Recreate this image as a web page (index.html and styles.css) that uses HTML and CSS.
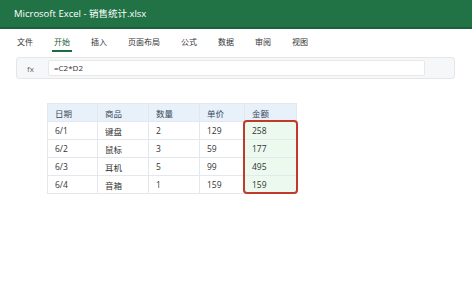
FILE: index.html
```html
<!DOCTYPE html>
<html lang="zh">
<head>
<meta charset="utf-8">
<title>Microsoft Excel - 销售统计.xlsx</title>
<link rel="stylesheet" href="styles.css">
</head>
<body>
<header class="titlebar">Microsoft Excel - 销售统计.xlsx</header>
<nav class="tabs">
  <span class="tab">文件</span>
  <span class="tab active">开始</span>
  <span class="tab">插入</span>
  <span class="tab">页面布局</span>
  <span class="tab">公式</span>
  <span class="tab">数据</span>
  <span class="tab">审阅</span>
  <span class="tab">视图</span>
</nav>
<div class="formula-bar">
  <span class="fx">fx</span>
  <div class="formula-input">=C2*D2</div>
</div>
<main class="sheet">
  <div class="table-wrap">
    <table class="grid">
      <thead>
        <tr><th class="c1">日期</th><th class="c2">商品</th><th class="c3">数量</th><th class="c4">单价</th><th class="c5">金额</th></tr>
      </thead>
      <tbody>
        <tr><td>6/1</td><td>键盘</td><td>2</td><td>129</td><td class="amt">258</td></tr>
        <tr><td>6/2</td><td>鼠标</td><td>3</td><td>59</td><td class="amt">177</td></tr>
        <tr><td>6/3</td><td>耳机</td><td>5</td><td>99</td><td class="amt">495</td></tr>
        <tr><td>6/4</td><td>音箱</td><td>1</td><td>159</td><td class="amt">159</td></tr>
      </tbody>
    </table>
    <div class="highlight"></div>
  </div>
</main>
</body>
</html>
```
FILE: styles.css
```css
* { box-sizing: border-box; }
html, body { margin: 0; padding: 0; background: #ffffff; }
body {
  font-family: "Open Sans", "Noto Sans CJK SC", sans-serif;
  font-size: 9px;
  color: #333;
}
.titlebar {
  height: 29px;
  background: #217346;
  border-bottom: 2px solid #1b5e3a;
  color: #fff;
  font-size: 9.5px;
  line-height: 27px;
  padding-left: 14px;
}
.tabs {
  display: flex;
  gap: 17px;
  padding: 7px 0 0 15px;
  height: 27px;
}
.tab {
  padding: 0 2px;
  height: 16px;
  line-height: 12px;
  font-size: 8px;
  color: #333;
}
.tab.active {
  border-bottom: 2px solid #1e6b41;
  color: #1e5e3a;
}
.formula-bar {
  margin: 1px 17px 0 16px;
  height: 22px;
  border: 1px solid #e4e6e8;
  border-radius: 3px;
  background: #f6f7f8;
  display: flex;
  align-items: center;
  padding: 0 29px 0 10px;
}
.fx {
  width: 21px;
  color: #666;
  font-size: 8px;
}
.formula-input {
  flex: 1;
  height: 16px;
  background: #fff;
  border: 1px solid #e6e8ea;
  border-radius: 2px;
  padding-left: 5px;
  line-height: 13px;
  font-size: 8px;
  color: #333;
}
.sheet {
  padding: 24px 0 0 47px;
}
.table-wrap {
  position: relative;
  display: inline-block;
}
.grid {
  border-collapse: collapse;
  font-size: 8.5px;
}
.grid th, .grid td {
  border: 1px solid #e4e7eb;
  text-align: left;
  padding: 0 0 0 7px;
  height: 18px;
  font-weight: normal;
  color: #333;
}
.grid th {
  background: #e8f0fa;
  height: 18px;
  color: #3a4a5a;
}
.c1 { width: 50px; }
.c2 { width: 51px; }
.c3 { width: 51px; }
.c4 { width: 45px; }
.c5 { width: 52px; }
.grid td.amt { background: #ebf9ef; }
.highlight {
  position: absolute;
  right: -1px;
  top: 17px;
  bottom: 0;
  width: 55px;
  border: 2px solid #c0392b;
  border-radius: 4px;
}
```
